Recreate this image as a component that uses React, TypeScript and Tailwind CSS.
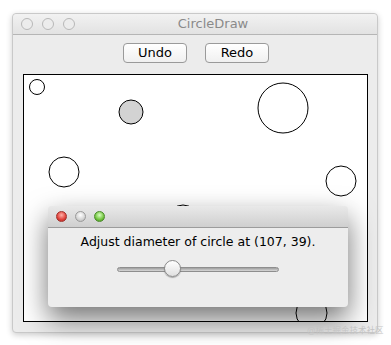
import React from "react";

function Light({ color }: { color: string }) {
  return <div className={`w-[11px] h-[11px] rounded-full ${color}`} />;
}

export default function App() {
  const font = { fontFamily: '"DejaVu Sans", "Noto Sans CJK SC", sans-serif' };
  return (
    <div className="relative w-[391px] h-[345px] bg-white overflow-hidden" style={font}>
      {/* main window */}
      <div className="absolute left-[12px] top-[13px] w-[366px] h-[320px] bg-[#ececec] border border-[#c9c9c9] rounded-[4px] shadow-[0_2px_6px_rgba(0,0,0,0.2)] flex flex-col">
        <div className="h-[21px] flex items-center relative border-b border-[#b5b5b5] bg-gradient-to-b from-[#f2f2f2] to-[#e2e2e2] rounded-t-[4px]">
          <div className="flex gap-[9px] pl-[8px]">
            <div className="w-[12px] h-[12px] rounded-full border border-[#b8b8b8] bg-[#ececec]" />
            <div className="w-[12px] h-[12px] rounded-full border border-[#b8b8b8] bg-[#ececec]" />
            <div className="w-[12px] h-[12px] rounded-full border border-[#b8b8b8] bg-[#ececec]" />
          </div>
          <div className="absolute inset-0 flex items-center justify-center text-[13px] text-[#8a8a8a] pl-[36px]">CircleDraw</div>
        </div>
        <div className="flex justify-center gap-[18px] pt-[8px] pl-[2px]">
          <div className="w-[64px] h-[20px] rounded-[4px] border border-[#9a9a9a] bg-gradient-to-b from-white to-[#f0f0f0] flex items-center justify-center text-[13px] text-black">Undo</div>
          <div className="w-[64px] h-[20px] rounded-[4px] border border-[#9a9a9a] bg-gradient-to-b from-white to-[#f0f0f0] flex items-center justify-center text-[13px] text-black">Redo</div>
        </div>
        <div className="ml-[10px] mt-[11px] w-[345px] h-[248px] border border-black bg-white relative overflow-hidden">
          <svg width="343" height="246" className="absolute left-0 top-0">
            <circle cx="13" cy="12" r="7.5" fill="white" stroke="black" strokeWidth="1" />
            <circle cx="107" cy="37" r="12" fill="#d3d3d3" stroke="black" strokeWidth="1" />
            <circle cx="259" cy="33" r="25" fill="white" stroke="black" strokeWidth="1" />
            <circle cx="40" cy="97" r="15" fill="white" stroke="black" strokeWidth="1" />
            <circle cx="317" cy="106" r="15" fill="white" stroke="black" strokeWidth="1" />
            <circle cx="159" cy="145" r="15" fill="white" stroke="black" strokeWidth="1" />
            <circle cx="287.5" cy="238" r="15.5" fill="white" stroke="black" strokeWidth="1" />
          </svg>
        </div>
      </div>

      {/* dialog */}
      <div className="absolute left-[48px] top-[206px] w-[300px] h-[101px] rounded-[4px] bg-[#ededed] shadow-[0_12px_28px_rgba(0,0,0,0.55)] flex flex-col overflow-hidden">
        <div className="h-[22px] flex items-center gap-[8px] pl-[8px] border-b border-[#9c9c9c] bg-gradient-to-b from-[#e9e9e9] to-[#cfcfcf]">
          <Light color="bg-[radial-gradient(circle_at_50%_35%,#ffb0a8,#e0413a_60%,#b02a24)] border border-[#a0302a]" />
          <Light color="bg-[radial-gradient(circle_at_50%_35%,#ffffff,#d4d4d4_60%,#b0b0b0)] border border-[#9a9a9a]" />
          <Light color="bg-[radial-gradient(circle_at_50%_35%,#d8ffc0,#72c43e_60%,#3e8a1e)] border border-[#4a8a2a]" />
        </div>
        <div className="flex flex-col items-center pt-[6px]">
          <div className="text-[12.5px] text-black leading-[16px]">Adjust diameter of circle at (107, 39).</div>
          <div className="relative w-[162px] h-[18px] mt-[10px] flex items-center">
            <div className="w-full h-[5px] rounded-full bg-gradient-to-b from-[#9e9e9e] to-[#d8d8d8] border border-[#8e8e8e]" />
            <div className="absolute left-[47px] top-0 w-[17px] h-[17px] rounded-full border border-[#8a8a8a] bg-gradient-to-b from-white to-[#e0e0e0] shadow-[0_1px_1px_rgba(0,0,0,0.3)]" />
          </div>
        </div>
      </div>

      {/* watermark */}
      <div className="absolute left-[307px] top-[324px] text-[8.5px] text-[#c4c4c4] leading-[12px] whitespace-nowrap">@稀土掘金技术社区</div>
    </div>
  );
}
